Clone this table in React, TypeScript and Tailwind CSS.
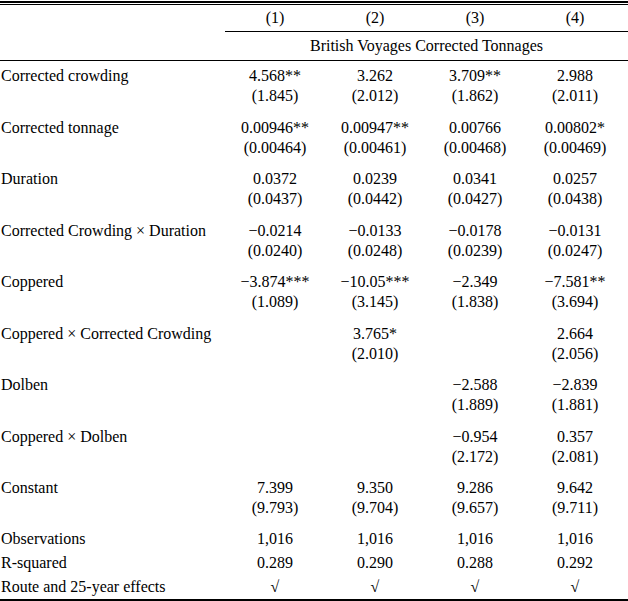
const rows: { label: string; coef: string[]; se: string[] }[] = [
  {
    label: "Corrected crowding",
    coef: ["4.568**", "3.262", "3.709**", "2.988"],
    se: ["(1.845)", "(2.012)", "(1.862)", "(2.011)"],
  },
  {
    label: "Corrected tonnage",
    coef: ["0.00946**", "0.00947**", "0.00766", "0.00802*"],
    se: ["(0.00464)", "(0.00461)", "(0.00468)", "(0.00469)"],
  },
  {
    label: "Duration",
    coef: ["0.0372", "0.0239", "0.0341", "0.0257"],
    se: ["(0.0437)", "(0.0442)", "(0.0427)", "(0.0438)"],
  },
  {
    label: "Corrected Crowding × Duration",
    coef: ["−0.0214", "−0.0133", "−0.0178", "−0.0131"],
    se: ["(0.0240)", "(0.0248)", "(0.0239)", "(0.0247)"],
  },
  {
    label: "Coppered",
    coef: ["−3.874***", "−10.05***", "−2.349", "−7.581**"],
    se: ["(1.089)", "(3.145)", "(1.838)", "(3.694)"],
  },
  {
    label: "Coppered × Corrected Crowding",
    coef: ["", "3.765*", "", "2.664"],
    se: ["", "(2.010)", "", "(2.056)"],
  },
  {
    label: "Dolben",
    coef: ["", "", "−2.588", "−2.839"],
    se: ["", "", "(1.889)", "(1.881)"],
  },
  {
    label: "Coppered × Dolben",
    coef: ["", "", "−0.954", "0.357"],
    se: ["", "", "(2.172)", "(2.081)"],
  },
  {
    label: "Constant",
    coef: ["7.399", "9.350", "9.286", "9.642"],
    se: ["(9.793)", "(9.704)", "(9.657)", "(9.711)"],
  },
]

const stats: { label: string; values: string[] }[] = [
  { label: "Observations", values: ["1,016", "1,016", "1,016", "1,016"] },
  { label: "R-squared", values: ["0.289", "0.290", "0.288", "0.292"] },
  { label: "Route and 25-year effects", values: ["√", "√", "√", "√"] },
]

function Cells({ values }: { values: string[] }) {
  return (
    <>
      {values.map((v, i) => (
        <div key={i} className="w-[100px] text-center whitespace-nowrap">
          {v}
        </div>
      ))}
    </>
  )
}

export default function App() {
  return (
    <div
      className="w-[628px] h-[601px] bg-white text-black text-[16px] leading-[20px] overflow-hidden"
      style={{ fontFamily: '"Liberation Serif", "Times New Roman", serif' }}
    >
      {/* top double rule */}
      <div className="pt-px">
        <div className="h-[2px] bg-black" />
        <div className="h-px mt-px bg-black" />
      </div>

      {/* column numbers */}
      <div className="flex pt-[3px] pb-[3px]">
        <div className="w-[225px]" />
        <Cells values={["(1)", "(2)", "(3)", "(4)"]} />
      </div>
      <div className="ml-[225px] h-px bg-black" />

      {/* sample header */}
      <div className="flex pt-[4px] pb-[4px]">
        <div className="w-[225px]" />
        <div className="flex-1 text-center">British Voyages Corrected Tonnages</div>
      </div>
      <div className="h-px bg-black" />

      {/* coefficients */}
      {rows.map((r) => (
        <div key={r.label} className="pt-[5px] pb-[6.5px]">
          <div className="flex">
            <div className="w-[225px] pl-px whitespace-nowrap">{r.label}</div>
            <Cells values={r.coef} />
          </div>
          <div className="flex">
            <div className="w-[225px]" />
            <Cells values={r.se} />
          </div>
        </div>
      ))}

      {/* statistics */}
      <div className="pt-[2.5px]">
        {stats.map((s) => (
          <div key={s.label} className="flex h-[24px] pt-[2px]">
            <div className="w-[225px] pl-px whitespace-nowrap">{s.label}</div>
            <Cells values={s.values} />
          </div>
        ))}
      </div>
      <div className="h-[2px] bg-black" />
    </div>
  )
}
